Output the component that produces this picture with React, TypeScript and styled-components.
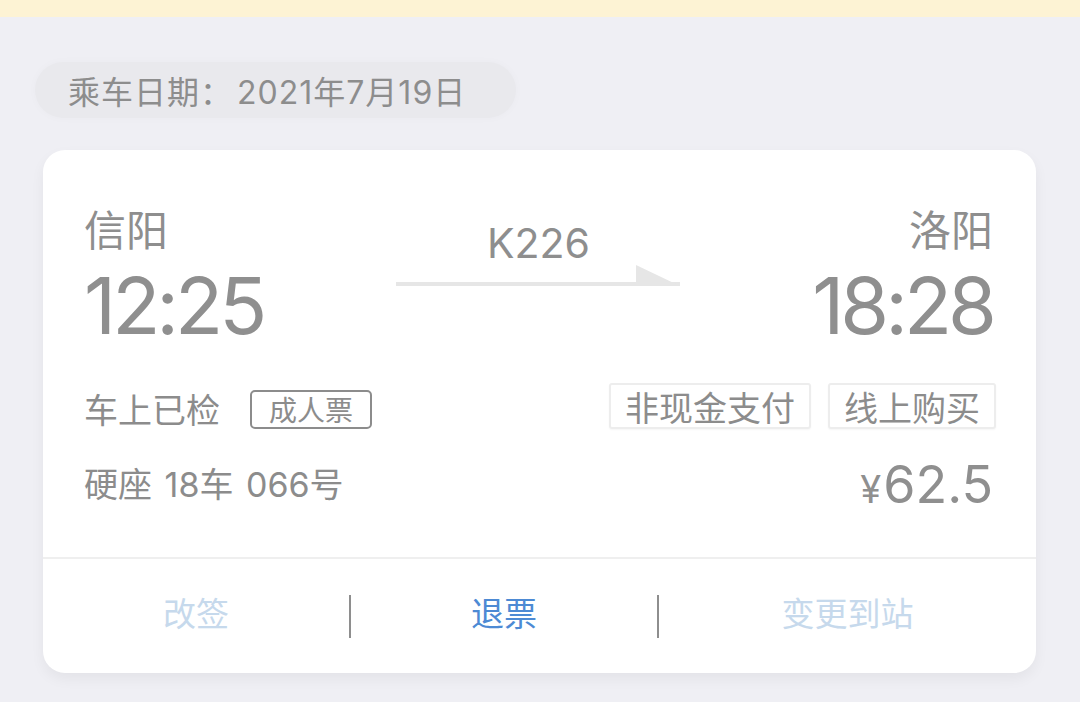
import React from "react";
import styled, { createGlobalStyle } from "styled-components";

const Global = createGlobalStyle`
  html, body { margin: 0; padding: 0; }
  body {
    background: #efeff4;
    font-family: Inter, "Noto Sans CJK SC", sans-serif;
    color: #8e8e8e;
  }
`;

const Page = styled.div`
  width: 1080px;
  height: 702px;
  overflow: hidden;
  background: #efeff4;
  display: flex;
  flex-direction: column;
`;

const Notice = styled.div`
  height: 17px;
  background: #fdf3d4;
  flex: none;
`;

const Body = styled.div`
  display: flex;
  flex-direction: column;
  align-items: flex-start;
  padding: 45px 44px 0 43px;
`;

const DatePill = styled.div`
  margin-left: -8px;
  height: 56px;
  display: flex;
  align-items: center;
  padding: 0 50px 0 33px;
  border-radius: 28px;
  background: #e9e9ed;
  box-shadow: 0 0 10px rgba(0, 0, 0, 0.025);
  font-family: "Noto Sans CJK SC", sans-serif;
  font-size: 32px;
  letter-spacing: 1px;
  color: #8d8d8d;
`;

const DateValue = styled.span`
  font-family: Inter, "Noto Sans CJK SC", sans-serif;
  letter-spacing: 1px;
  margin-left: 4px;
`;

const Card = styled.div`
  margin-top: 32px;
  width: 993px;
  background: #fff;
  border-radius: 22px;
  box-shadow: 0 6px 14px rgba(0, 0, 0, 0.05);
  display: flex;
  flex-direction: column;
`;

const Main = styled.div`
  padding: 52px 43px 44px 41px;
  display: flex;
  flex-direction: column;
`;

const Route = styled.div`
  display: grid;
  grid-template-columns: 1fr auto 1fr;
  align-items: start;
`;

const Station = styled.div<{ $right?: boolean }>`
  display: flex;
  flex-direction: column;
  align-items: ${(p) => (p.$right ? "flex-end" : "flex-start")};
`;

const StationName = styled.div`
  font-family: "Noto Sans CJK SC", sans-serif;
  font-size: 42px;
  line-height: 52px;
  color: #8e8e8e;
`;

const Time = styled.div`
  margin-top: 9px;
  margin-bottom: -2px;
  font-size: 79px;
  line-height: 84px;
  font-weight: 400;
  color: #8f8f8f;
  letter-spacing: -4px;
  padding-right: 4px;
  margin-right: -4px;
`;

const Train = styled.div`
  padding-top: 18px;
  display: flex;
  flex-direction: column;
  align-items: center;
`;

const TrainNo = styled.div`
  font-size: 41px;
  line-height: 46px;
  color: #8e8e8e;
`;

const Arrow = styled.svg`
  display: block;
  margin-top: -1px;
`;

const InfoRow = styled.div<{ $mt: number }>`
  margin-top: ${(p) => p.$mt}px;
  display: flex;
  align-items: center;
  justify-content: space-between;
`;

const Group = styled.div<{ $gap: number }>`
  display: flex;
  align-items: center;
  gap: ${(p) => p.$gap}px;
`;

const Label = styled.span`
  font-family: "Noto Sans CJK SC", sans-serif;
  font-size: 34px;
  line-height: 40px;
  color: #8c8c8c;
`;

const Seat = styled.span`
  font-family: Inter, "Noto Sans CJK SC", sans-serif;
  font-size: 34px;
  line-height: 40px;
  color: #8c8c8c;
  word-spacing: 3px;
`;

const TicketType = styled.span`
  height: 35px;
  padding: 0 17px;
  border: 2px solid #8c8c8c;
  border-radius: 5px;
  display: inline-flex;
  align-items: center;
  font-family: "Noto Sans CJK SC", sans-serif;
  font-size: 28px;
  color: #8c8c8c;
`;

const Tag = styled.span`
  height: 42px;
  padding: 0 14px;
  border: 2px solid #ededed;
  border-radius: 3px;
  display: inline-flex;
  align-items: center;
  font-family: "Noto Sans CJK SC", sans-serif;
  font-size: 34px;
  color: #8c8c8c;
  box-shadow: 0 1px 2px rgba(0, 0, 0, 0.04);
  transform: translateY(-3px);
  &:last-child {
    margin-right: -3px;
  }
`;

const Price = styled.span`
  display: inline-flex;
  align-items: baseline;
  color: #8f8f8f;
`;

const Yen = styled.span`
  font-size: 38px;
  margin-right: 2px;
`;

const Amount = styled.span`
  font-size: 52px;
  line-height: 56px;
`;

const Divider = styled.div`
  height: 2px;
  background: #efefef;
`;

const Actions = styled.div`
  height: 114px;
  display: flex;
  align-items: center;
`;

const Action = styled.div<{ $w?: number; $active?: boolean }>`
  ${(p) => (p.$w ? `width: ${p.$w}px;` : "flex: 1;")}
  flex-shrink: 0;
  text-align: center;
  font-family: "Noto Sans CJK SC", sans-serif;
  font-size: 33px;
  line-height: 40px;
  margin-top: -8px;
  color: ${(p) => (p.$active ? "#4d8ad4" : "#c6d9ec")};
`;

const Sep = styled.div`
  width: 2px;
  height: 43px;
  background: #8e8e8e;
  flex: none;
`;

export default function App() {
  return (
    <Page>
      <Global />
      <Notice />
      <Body>
        <DatePill>
          乘车日期：<DateValue>2021年7月19日</DateValue>
        </DatePill>
        <Card>
          <Main>
            <Route>
              <Station>
                <StationName>信阳</StationName>
                <Time>12:25</Time>
              </Station>
              <Train>
                <TrainNo>K226</TrainNo>
                <Arrow width="286" height="24" viewBox="0 0 286 24">
                  <rect x="0" y="17" width="284" height="4" fill="#e6e6e6" />
                  <polygon points="240,0 284,21 240,21" fill="#e6e6e6" />
                </Arrow>
              </Train>
              <Station $right>
                <StationName>洛阳</StationName>
                <Time>18:28</Time>
              </Station>
            </Route>
            <InfoRow $mt={41}>
              <Group $gap={30}>
                <Label>车上已检</Label>
                <TicketType>成人票</TicketType>
              </Group>
              <Group $gap={17}>
                <Tag>非现金支付</Tag>
                <Tag>线上购买</Tag>
              </Group>
            </InfoRow>
            <InfoRow $mt={25}>
              <Seat>硬座 18车 066号</Seat>
              <Price>
                <Yen>¥</Yen>
                <Amount>62.5</Amount>
              </Price>
            </InfoRow>
          </Main>
          <Divider />
          <Actions>
            <Action $w={306}>改签</Action>
            <Sep />
            <Action $w={306} $active>
              退票
            </Action>
            <Sep />
            <Action>变更到站</Action>
          </Actions>
        </Card>
      </Body>
    </Page>
  );
}
